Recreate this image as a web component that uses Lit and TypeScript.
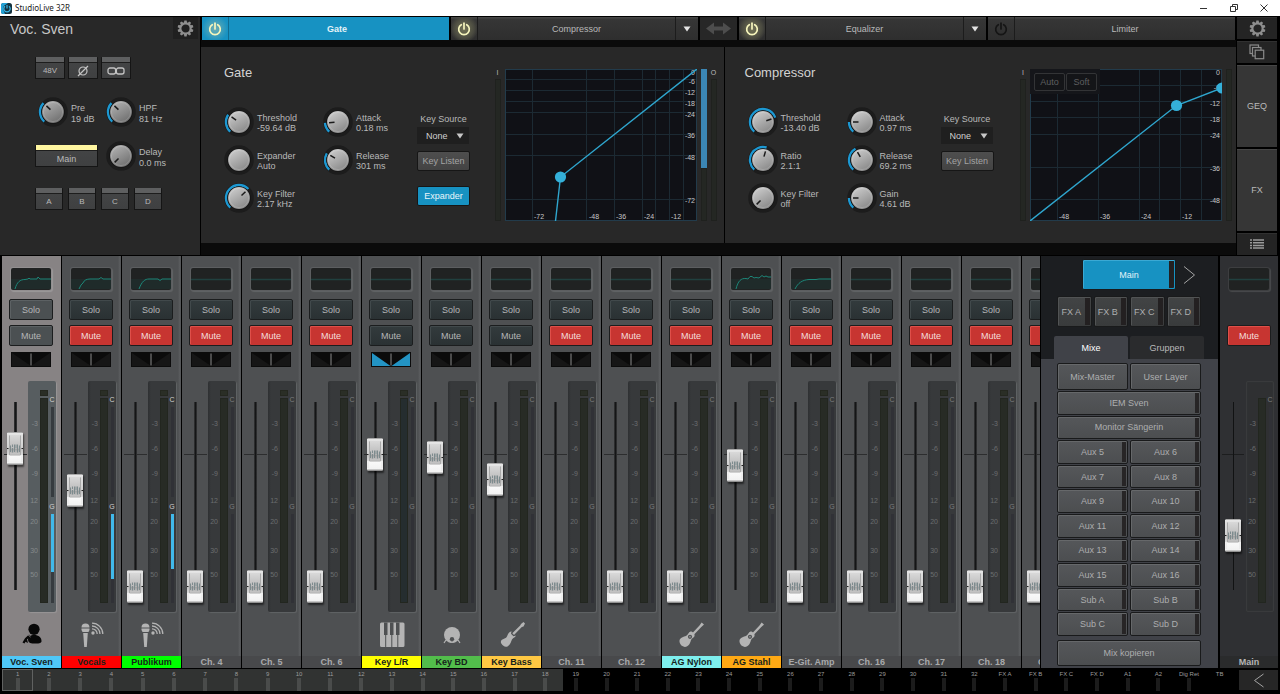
import { LitElement, html, svg, css, nothing, unsafeCSS } from "lit";
import { customElement, property } from "lit/decorators.js";
import { classMap } from "lit/directives/class-map.js";
import { styleMap } from "lit/directives/style-map.js";

const svgUrl = (markup: string) => unsafeCSS(`url("data:image/svg+xml,${encodeURIComponent(markup)}")`);

const faderCap = svgUrl(`<svg xmlns="http://www.w3.org/2000/svg" width="16" height="33" viewBox="0 0 16 33">
<defs><linearGradient id="b" x2="0" y2="1"><stop offset="0" stop-color="#8b8b8b"/><stop offset=".05" stop-color="#efefef"/><stop offset=".1" stop-color="#d8d8d8"/><stop offset=".48" stop-color="#bcbcbc"/><stop offset=".53" stop-color="#a2a2a2"/><stop offset=".68" stop-color="#c9c9c9"/><stop offset=".7" stop-color="#fafafa"/><stop offset=".93" stop-color="#f2f2f2"/><stop offset="1" stop-color="#777"/></linearGradient></defs>
<rect width="16" height="33" rx="1" fill="url(#b)"/>
<path d="M2.5 3.5V23H13.5V3.5" fill="none" stroke="#a9a9a9" stroke-width="1"/><path d="M1 3V30M15 3V30" stroke="#e6e6e6"/>
<path d="M0 16.500H1.500M14.500 16.500H16" stroke="#222"/>
<path d="M3.500 13.500V20M5.500 12.500V15M5.500 16V20.500M7.500 12.500V20M9 12.500V16M10.500 12.500V20.500M12.500 13.500V20" stroke="#7d8b8e" stroke-width="1"/></svg>`);

const downArrow = svgUrl(`<svg xmlns="http://www.w3.org/2000/svg" width="8" height="6"><path d="M0.500 0.500H7.500L4 5.500Z" fill="#c8c8c8"/></svg>`);

const base = css`
  * { box-sizing: border-box; }
  button, select, input {
    font: inherit;
    color: inherit;
    margin: 0;
    padding: 0;
    border: 0;
    border-radius: 0;
    background: none;
  }
  svg { display: block; flex: none; }
`;

const gearIcon = (size: number) => svg`
  <svg width=${size} height=${size} viewBox="0 0 18 18" aria-hidden="true">
    <g fill="#8e8e8e">
      ${Array.from({ length: 10 }, (_, i) => svg`<path d="M7.200 3.800L7.800 0.600H10.200L10.800 3.800Z" transform="rotate(${i * 36} 9 9)"></path>`)}
    </g>
    <circle cx="9" cy="9" r="5.400" fill="none" stroke="#8e8e8e" stroke-width="2.200"></circle>
  </svg>`;

const powerIcon = (color: string) => svg`
  <svg width="14" height="14" viewBox="0 0 14 14" aria-hidden="true">
    <path d="M4.300 2.700A5.300 5.300 0 1 0 9.700 2.700" fill="none" stroke=${color} stroke-width="1.700" stroke-linecap="round"></path>
    <path d="M7 1.200V7" stroke=${color} stroke-width="1.700" stroke-linecap="round"></path>
  </svg>`;

const triangle = svg`<svg width="8" height="6" viewBox="0 0 8 6" aria-hidden="true"><path d="M0.500 0.500H7.500L4 5.500Z" fill="#e4e4e4"></path></svg>`;

const acoustic = svg`
  <g transform="translate(1 1)">
    <path d="M23.600 0.600L26 2.600L23.300 5L15.600 13L14 11.500L21.500 3.500Z" fill="#b4b4b4"></path>
    <path d="M12.500 9.600C14.500 9.300 17.300 12.200 16.500 14.300C15.800 16 13.600 16.200 12.900 18.300C12.200 21.500 10.600 24.800 6.800 24.900C3.200 24.600 1.200 21.300 1.500 18.600C2 15.700 5.500 14.900 8.300 13.800C10.200 13 10.500 10.200 12.500 9.600Z" fill="#b4b4b4"></path>
    <circle cx="12" cy="14.800" r="2.100" fill="#4e5052"></circle><circle cx="12" cy="14.800" r="1" fill="#85878a"></circle>
  </g>`;

const mic = svg`
  <path d="M4.500 6.500A4 4 0 0 1 12.500 6.500Z M4.500 7.500H12.500V9L11.500 11H5.500L4.500 9Z M6.200 12H10.800L9.800 26H7.200Z" fill="#b4b4b4"></path>
  <circle cx="16" cy="12" r="1.700" fill="#b4b4b4"></circle>
  <path d="M15 7.800A5.200 5.200 0 0 1 20.200 13M15 5A8 8 0 0 1 23 13M15 2.200A10.800 10.800 0 0 1 25.800 13" fill="none" stroke="#b4b4b4" stroke-width="1.300"></path>`;

const stripIcons: Record<string, unknown> = {
  singer: svg`
    <circle cx="17" cy="8.300" r="5.600" fill="#080808"></circle>
    <path d="M11 18.500C11 15.500 13.500 14 17 14C21.700 14 24.700 16.500 24.500 20.500C24.300 22.300 21 22.600 17.500 22.600C14.500 22.600 11.200 22.300 11 18.500Z" fill="#080808"></path>
    <path d="M5.500 21.500L8 17.200L12 13.500L14 16L10 18.300L11 22L8.500 20.800L7.500 22.500Z" fill="#080808"></path>
    <path d="M10.800 13.500L13.500 16" stroke="#878384" stroke-width="1"></path>`,
  mic,
  piano: svg`
    <path d="M4.500 1.500H26A1.500 1.500 0 0 1 27.500 3V24.500A1.500 1.500 0 0 1 26 26H4.500A1.500 1.500 0 0 1 3 24.500V3A1.500 1.500 0 0 1 4.500 1.500Z" fill="#b4b4b4"></path>
    <path d="M7 1.500H10.500V14H7ZM13 1.500H16.500V14H13ZM19 1.500H22.500V14H19Z" fill="#4e5052"></path>
    <path d="M8.700 13V26M14.800 13V26M20.800 13V26" stroke="#4e5052" stroke-width="1"></path>`,
  kick: svg`
    <circle cx="15" cy="14" r="8" fill="#b4b4b4"></circle>
    <circle cx="15" cy="18.300" r="2.200" fill="#4e5052"></circle>
    <path d="M9 19L7 22M21 19L23 22M13.500 21.500V19.800M16.500 21.500V19.800" stroke="#b4b4b4" stroke-width="1.200"></path>`,
  bass: svg`
    <path d="M24 3L26.500 1L28 2.500L26.500 5.500L24.800 6L17 14L15.300 12.300L23.200 4.500Z" fill="#b4b4b4"></path>
    <path d="M14.500 10.200L14 12.800L16.500 15.200L18.800 14.500C18.500 16.500 16.300 16.400 15 18.500C14 20.200 13.800 23.500 10.500 25.500C7.800 26.600 6 24.800 4.500 22.800C3 20.500 4.300 18.700 6.500 18C9 17.200 9.500 16.500 10.500 14.300C11.300 12.300 12.500 10.600 14.500 10.200Z" fill="#b4b4b4"></path>`,
  acoustic,
};

@customElement("knob-control")
export class KnobControl extends LitElement {
  @property() label = "";
  @property() value = "";
  @property({ type: Number }) angle: number | null = null;
  @property({ type: Boolean }) dim = false;

  static styles = [base, css`
    :host { display: block; }
    .knob { display: flex; align-items: center; gap: 3px; height: 30px; line-height: 10px; white-space: nowrap; color: #b9b9b9; }
    .dial { display: grid; width: 30px; height: 30px; flex: none; }
    .dial > * { grid-area: 1 / 1; }
    .range { width: 30px; height: 30px; opacity: 0; cursor: pointer; }
    .text { display: grid; margin-top: 2px; }
    .dim .text { gap: 1px; }
  `];

  private arc(angle: number) {
    const point = (deg: number) => {
      const rad = (deg * Math.PI) / 180;
      return `${15 + 13 * Math.sin(rad)} ${15 - 13 * Math.cos(rad)}`;
    };
    return `M${point(-138)}A13 13 0 ${angle + 138 > 180 ? 1 : 0} 1 ${point(angle)}`;
  }

  render() {
    const a = this.angle;
    const light = this.dim ? "#b2b2b2" : "#cdcdcd";
    const dark = this.dim ? "#6c6c6c" : "#858585";
    return html`
      <label class=${classMap({ knob: true, dim: this.dim })}>
        <span class="dial">
          <svg width="30" height="30" viewBox="0 0 30 30" aria-hidden="true">
            <defs>
              <linearGradient id="g" x1="0.200" y1="0" x2="0.800" y2="1">
                <stop offset="0" stop-color=${light}></stop><stop offset="1" stop-color=${dark}></stop>
              </linearGradient>
            </defs>
            <circle cx="15" cy="15" r="14.800" fill="#1c1c1c"></circle>
            ${a !== null && a > -130 ? svg`<path d=${this.arc(a)} fill="none" stroke="#1c98d2" stroke-width="2.400"></path>` : nothing}
            <circle cx="15" cy="15" r="11.600" fill="#101010"></circle>
            <circle cx="15" cy="15" r="10.900" fill="url(#g)"></circle>
            <circle cx="15" cy="15" r="9.600" fill="none" stroke="#ffffff" stroke-opacity="0.150" stroke-width="1"></circle>
            ${a !== null ? svg`<path d="M15 6V11.500" stroke="#1a1a1a" stroke-width="1.500" transform="rotate(${a} 15 15)"></path>` : nothing}
          </svg>
          <input class="range" type="range" min="-135" max="135" .value=${String(a ?? 0)} />
        </span>
        <span class="text"><span>${this.label}</span><span>${this.value}</span></span>
      </label>`;
  }
}

interface Channel {
  name: string;
  color?: string;
  icon?: string;
  muted?: boolean;
  selected?: boolean;
  level: number;
  gain?: number;
  eq?: string;
  wide?: boolean;
}

const quiet = 0;
const channels: Channel[] = [
  { name: "Voc. Sven", color: "#4fc8f8", icon: "singer", selected: true, level: 138, gain: 58, eq: "M4 21C6 14 9 11.500 14 11.500L17 11L18 10L19 11H26L27 9L29 11H40" },
  { name: "Vocals", color: "#ff0000", icon: "mic", muted: true, level: 96, gain: 65, eq: "M8 21L10 17L12 15C13 12 16 11 19 11H28L30 9.500L32 11H40" },
  { name: "Publikum", color: "#00ff00", icon: "mic", muted: true, level: quiet, gain: 55, eq: "M8 21C11 13 14 11 18 11H27L29 12.500L31 11H40" },
  { name: "Ch. 4", muted: true, level: quiet },
  { name: "Ch. 5", muted: true, level: quiet },
  { name: "Ch. 6", muted: true, level: quiet },
  { name: "Key L/R", color: "#ffff00", icon: "piano", level: 132, wide: true },
  { name: "Key BD", color: "#52bd4b", icon: "kick", level: 129 },
  { name: "Key Bass", color: "#ffc843", icon: "bass", level: 107 },
  { name: "Ch. 11", muted: true, level: quiet },
  { name: "Ch. 12", muted: true, level: quiet },
  { name: "AG Nylon", color: "#7eefee", icon: "acoustic", muted: true, level: quiet },
  { name: "AG Stahl", color: "#ffa914", icon: "acoustic", muted: true, level: 121, eq: "M5 21C7 13 10 10 15 10.500L17 11L19 8.500L21 8.500L23 10L25 9.500L28 10L31 7.500L33 9L35 8L37 9H40" },
  { name: "E-Git. Amp", muted: true, level: quiet, eq: "M4 21C7 15 11 12 18 11.500H25L28 11H40" },
  { name: "Ch. 16", muted: true, level: quiet },
  { name: "Ch. 17", muted: true, level: quiet },
  { name: "Ch. 18", muted: true, level: quiet },
  { name: "Ch. 19", muted: true, level: quiet },
];
const mainChannel: Channel = { name: "Main", muted: true, level: 51 };

@customElement("channel-strip")
export class ChannelStrip extends LitElement {
  @property({ attribute: false }) channel!: Channel;
  @property({ type: Boolean }) master = false;

  static styles = [base, css`
    :host { display: block; flex: none; width: 60px; }
    .strip {
      display: flex; flex-direction: column; height: 100%;
      background: linear-gradient(to right, #4e5052 56px, #5c5e60 58px, #4e5052 59px);
      border-right: 1px solid #000;
      color: #b5b6b7;
    }
    .selected { background: #878384; }
    .master { background: #2f3033; border-right: 0; width: 58px; }
    .controls { display: flex; flex-direction: column; padding: 12px 7px 14px; }
    .eq { width: 40px; height: 22px; margin: 0 2px 9px; border-radius: 2px; background: #202222; box-shadow: 0 0 0 1px #5c5e60, 1px 1px 1px 1px #626466; }
    .selected .eq { box-shadow: 0 0 0 1px #928f90, 1px 1px 1px 1px #9c999a; }
    .master .eq { box-shadow: 0 0 0 1px #3d3e40, 1px 1px 1px 1px #4a4b4d; }
    .btn {
      height: 21px; width: 44px; border: 1px solid #1b1d1e; border-radius: 2px; margin-bottom: 5px;
      background: linear-gradient(#333b3d, #2a3133); box-shadow: inset 1px 1px 0 #41494b; text-align: center;
    }
    .selected .btn { background: #4b5052; box-shadow: inset 1px 1px 0 #5c6163; }
    .btn.muted { background: #c73531; box-shadow: inset 1px 1px 0 #df4f49; color: #f4dddc; }
    .gap { height: 21px; margin-bottom: 5px; }
    .pan { width: 40px; height: 15px; margin: 1px 2px 0; background: #0e0e0e; }
    .blank { visibility: hidden; }
    .area { display: grid; grid-template-columns: 26px 28px; height: 231px; }
    .fader {
      appearance: none; -webkit-appearance: none; writing-mode: vertical-lr; direction: rtl;
      width: 26px; height: 217px; margin-top: 5px;
      background:
        linear-gradient(to right, #3c3d3e, #141516 40%, #141516 60%, #3c3d3e) 12px 16px / 3px 188px no-repeat,
        linear-gradient(#2c2d2e, #2c2d2e) 2px 68px / 23px 1px no-repeat;
    }
    .master .fader {
      background:
        linear-gradient(#111213, #111213) 13px 16px / 1px 188px no-repeat,
        linear-gradient(#1c1d1e, #1c1d1e) 2px 68px / 22px 1px no-repeat;
    }
    .fader::-webkit-slider-runnable-track { width: 26px; height: 217px; background: none; }
    .fader::-webkit-slider-thumb {
      -webkit-appearance: none; width: 16px; height: 33px; margin: 0 5px;
      background: ${faderCap}; border: 0; border-radius: 1px; box-shadow: 1px 2px 2px rgba(0, 0, 0, 0.55);
    }
    .meter {
      display: grid; grid-template-columns: 12px 8px 8px; height: 231px; border-radius: 2px;
      background: linear-gradient(to right, #2e3032, #37393b 3px, #37393b); box-shadow: 1px 1px 1px #616365;
    }
    .selected .meter { background: #575d60; box-shadow: 1px 1px 1px #989596; }
    .master .meter { background: #2f3032; box-shadow: inset 0 0 1px 1px #3b3c3e; }
    .scale {
      display: grid; grid-template-rows: 25px 25px 27px 21px 29px 24px 10px; padding: 38px 2px 0 0;
      font-size: 7px; line-height: 10px; color: #6b6d6f; text-align: right;
    }
    .selected .scale { color: #868a8c; }
    .bar { display: flex; flex-direction: column; gap: 2px; padding: 9px 0; }
    .clip { height: 6px; background: #2a2e26; border: 1px solid #24271f; }
    .level { flex: 1; background: #272b25; border: 1px solid #22261f; }
    .wide .level { background: #252d2f; }
    .master .clip { visibility: hidden; }
    .dyn { display: flex; flex-direction: column; align-items: center; font-size: 7px; line-height: 8px; padding-top: 15px; gap: 3px; color: #7b7d7f; }
    .active .dyn { color: #d2d2d2; }
    .slot { width: 3px; height: 90px; background: #303136; }
    .slot.second { height: 89px; }
    .slot.long { height: 189px; }
    .selected .slot { background: #363b3f; }
    .g { margin-top: 3px; }
    .fill { width: 3px; background: #41b9ea; }
    .icon { flex: 1; display: grid; place-items: center; min-height: 44px; padding-top: 2px; }
    .name { height: 12px; line-height: 12px; font-weight: bold; text-align: center; white-space: nowrap; background: #48494b; color: #a9aaab; }
    .named { color: #16221c; }
    .master .name { background: #2a2b2c; color: #b5b5b5; }
  `];

  render() {
    const c = this.channel;
    const eqPath = c.eq;
    return html`
      <section class=${classMap({ strip: true, selected: !!c.selected, master: this.master, active: !!c.gain, wide: !!c.wide })} aria-label=${c.name}>
        <div class="controls">
          <svg class="eq" viewBox="0 0 40 22" aria-hidden="true">
            ${eqPath
              ? svg`<path d="M0 11H40V21H0Z" fill="#1e3836" opacity="0.450"></path><path d=${eqPath} fill="none" stroke="#1d8678" stroke-width="1"></path>`
              : svg`<path d="M0 11.500H40" stroke="#20403f" stroke-width="1.500"></path>`}
          </svg>
          ${this.master ? html`<div class="gap"></div>` : html`<button class="btn">Solo</button>`}
          <button class=${classMap({ btn: true, muted: !!c.muted })}>Mute</button>
          <svg class=${classMap({ pan: true, blank: this.master })} viewBox="0 0 40 15" aria-hidden="true">
            <rect width="40" height="15" fill="#0b0b0b"></rect>
            <path d=${c.wide ? "M1 1V14H19.500ZM39 1V14H20.500Z" : "M1 1L20 14H1ZM39 1L20 14H39Z"} fill=${c.wide ? "#2394c4" : "#161616"}></path>
            <path d="M20 1.500V13.500" stroke="#8b8b8b" stroke-width="1"></path>
          </svg>
        </div>
        <div class="area">
          <input class="fader" type="range" min="0" max="184" .value=${String(c.level)} aria-label="${c.name} level" />
          <div class="meter">
            <div class="scale">${["-3", "-6", "-9", "12", "20", "30", "50"].map((t) => html`<span>${t}</span>`)}</div>
            <div class="bar"><div class="clip"></div><div class="level"></div></div>
            <div class="dyn">
              <span>C</span>
              ${this.master
                ? html`<div class="slot long"></div>`
                : html`<div class="slot"></div><span class="g">G</span>
                    <div class="slot second"><div class="fill" style=${styleMap({ height: `${c.gain ?? 0}px` })}></div></div>`}
            </div>
          </div>
        </div>
        <div class="icon">
          ${c.icon ? html`<svg width="30" height="28" viewBox="0 0 30 28" aria-hidden="true">${stripIcons[c.icon]}</svg>` : nothing}
        </div>
        <div class=${classMap({ name: true, named: !!c.color })} style=${styleMap(c.color ? { background: c.color } : {})}>${c.name}</div>
      </section>`;
  }
}

interface Plot {
  x: number[];
  y: number[];
  right: [string, number][];
  bottom: [string, number][];
  curve: string;
  dots: [number, number][];
}

const gatePlot: Plot = {
  x: [27, 81, 109, 137, 150, 164, 178],
  y: [10, 21, 32, 43, 65, 86, 130],
  right: [["0", 3], ["-6", 12], ["-12", 23], ["-18", 34], ["-24", 45], ["-36", 66], ["-48", 88], ["-72", 131]],
  bottom: [["-72", 29], ["-48", 84], ["-36", 111], ["-24", 139], ["-12", 166]],
  curve: "M50.500 152L55.500 108L192 0",
  dots: [[55.5, 108]],
};
const compPlot: Plot = {
  x: [27, 68, 109, 129, 150, 171],
  y: [16, 32, 48, 65, 98, 130],
  right: [["0", 3], ["-6", 18], ["-12", 34], ["-18", 50], ["-24", 66], ["-36", 99], ["-48", 131]],
  bottom: [["-48", 29], ["-36", 70], ["-24", 111], ["-12", 152]],
  curve: "M0 152L146.500 36.500L192 19",
  dots: [[146.5, 36.5], [192, 19]],
};

@customElement("app-root")
export class AppRoot extends LitElement {
  static styles = [base, css`
    :host {
      display: flex; flex-direction: column; min-height: 100vh; background: #000; color: #b9b9b9;
      font-family: "Liberation Sans", Arial, sans-serif; font-size: 9px; line-height: 12px;
    }
    .titlebar { display: flex; align-items: center; height: 16px; background: #fff; color: #222; font-family: "Noto Sans", sans-serif; font-size: 8px; padding: 0 9px 0 1px; gap: 3px; }
    .titlebar .grow { flex: 1; }
    .wins { display: flex; gap: 15px; }
    .wins button { width: 15px; height: 14px; display: grid; place-items: center; }

    .top { display: flex; gap: 1px; height: 240px; padding: 1px 3px 1px 0; }
    .input { width: 200px; flex: none; background: #282828; }
    .head { display: flex; justify-content: space-between; height: 40px; padding: 0 2px 0 10px; }
    .head h1 { margin: 0; font-size: 14px; font-weight: normal; line-height: 24px; color: #c8c8c8; }
    .head .cog { width: 25px; height: 22px; background: #202020; display: grid; place-items: center; }
    .rows { padding-left: 35px; }
    .row { display: flex; gap: 3px; }
    .quad { gap: 5px; margin-top: 17px; }
    .pair { display: grid; grid-template-columns: 71px 1fr; align-items: center; margin-top: 14px; }
    .pair.first { margin-top: 18px; }
    .pair .in { margin-left: 3px; }
    .lit {
      width: 30px; height: 22px; border: 1px solid #151515; border-top: 0; padding-top: 6px; display: grid; place-items: center;
      background: linear-gradient(#5e5f60 5px, #1d1d1d 5px, #1d1d1d 6px, #434445 6px, #3f4041);
      font-size: 8px; line-height: 12px; border-radius: 1px;
    }
    .quad .lit { width: 28px; }
    .lit.on { width: 63px; font-size: 9px; background: linear-gradient(#fff6a0 5px, #1d1d1d 5px, #1d1d1d 6px, #434445 6px, #3f4041); }

    .center { flex: 1; min-width: 0; display: flex; flex-direction: column; background: #0b0b0b; }
    .tabs { display: flex; gap: 2px; height: 23px; padding: 0 1px; background: #000; }
    .tab { flex: 1; display: flex; background: linear-gradient(#454645 1px, #363636 2px, #2e2e2e); }
    .tab .power { width: 27px; display: grid; place-items: center; border-right: 1px solid #1c1c1c; }
    .tab .power.lit-on { background: radial-gradient(circle, #6d6d52 2px, #4a4a40 10px, transparent 14px); }
    .tab .label { flex: 1; text-align: center; }
    .tab .drop { width: 23px; display: grid; place-items: center; border-left: 1px solid #1c1c1c; }
    .tab.active { background: #1792c2; color: #e4f2f8; font-weight: bold; }
    .tab.active .label { padding-right: 4px; }
    .tab.active .power { border-color: #106c90; }
    .tab.active .power.lit-on { background: radial-gradient(circle, #63aab4 2px, #1792c2 13px); }
    .swap { width: 37px; background: #272727; display: grid; place-items: center; }
    .panels { display: flex; gap: 1px; margin-top: 7px; background: #000; }
    .panel { display: flex; justify-content: space-between; height: 196px; background: #282828; padding: 0 7px 0 23px; }
    .gate { flex: 493 1 0; }
    .comp { flex: 488 1 0; padding-left: 20px; padding-right: 4px; }
    .comp .params { padding-left: 3px; }
    .panel h2 { margin: 17px 0 27px; font-size: 13px; font-weight: normal; line-height: 17px; height: 16px; color: #d3d3d3; }
    .params { display: grid; grid-template-columns: 99px 94px 53px; }
    .knobs { display: flex; flex-direction: column; gap: 8px; }
    .key { display: flex; flex-direction: column; padding-top: 6px; }
    .key label { display: grid; gap: 2px; text-align: center; white-space: nowrap; }
    .key select { appearance: none; width: 52px; height: 17px; padding-left: 9px; color: #d0d0d0; background: ${downArrow} 39px 6px no-repeat #1f1f1f; }
    .push { height: 20px; border: 1px solid #161616; border-radius: 2px; background: linear-gradient(#4e4e4e, #434343); color: #a3a3a3; margin-top: 7px; white-space: nowrap; }
    .push.on { background: #1792c2; color: #eaf6fb; margin-top: 15px; }
    .scope { display: flex; gap: 4px; margin-top: 22px; height: 152px; }
    .vu { display: flex; flex-direction: column; width: 6px; font-size: 7px; line-height: 7px; gap: 3px; align-items: center; }
    .vu i { flex: 1; width: 6px; background: #242723; border: 1px solid #1f211e; }
    .vu .reduction { flex: none; height: 99px; background: #3b86b4; border: 0; }
    .vu.solid { gap: 0; }
    .plot { display: grid; width: 192px; background: #101116; }
    .plot > * { grid-area: 1 / 1; }
    .plot text { font-size: 7px; fill: #c6c6c6; }
    .modes { display: flex; gap: 1px; align-self: start; justify-self: start; background: #15161a; padding: 4px 3px 3px 4px; z-index: 1; }
    .modes button { width: 31px; height: 18px; border: 1px solid #333436; border-radius: 2px; color: #5e5f60; background: #141518; }

    .side { width: 40px; display: flex; flex-direction: column; gap: 2px; }
    .side button { display: grid; place-items: center; height: 22px; background: #242424; box-shadow: inset 0 1px 0 #303030; }
    .side .big { flex: 1; background: #363636; box-shadow: inset 0 1px 0 #474747; }

    .mixer { flex: 1; display: flex; min-height: 412px; padding-left: 2px; }
    .channels { flex: 1; min-width: 0; display: flex; overflow: hidden; }
    .mixes { width: 180px; flex: none; display: flex; flex-direction: column; background: #1c1e21; border: solid #000; border-width: 0 2px 0 1px; }
    .mainrow { display: flex; gap: 7px; align-items: center; padding: 3px 0 0 41px; }
    .key-btn {
      height: 100%; border: 1px solid #191a1b; border-radius: 2px; white-space: nowrap; color: #adaeaf;
      box-shadow: inset 1px 1px 0 #66686a; background: linear-gradient(#55575a, #4c4e50);
    }
    .slotted {
      background: linear-gradient(#272526, #272526) right 1px center / 4px calc(100% - 2px) no-repeat, linear-gradient(#55575a, #4c4e50);
    }
    .key-btn.main { width: 94px; height: 31px; color: #e3f2f8; background: linear-gradient(#232021, #232021) right 1px center / 5px calc(100% - 2px) no-repeat, #1792c2; box-shadow: inset 1px 1px 0 #3aa9d4, inset -1px -1px 0 #1792c2; }
    .chev { width: 13px; height: 20px; }
    .fx { display: grid; grid-template-columns: repeat(4, 1fr); gap: 2px; padding: 6px 17px 0 16px; height: 37px; }
    .fx .key-btn { padding-right: 6px; background: linear-gradient(#232021, #232021) right 1px center / 5px calc(100% - 2px) no-repeat, linear-gradient(#424445, #393b3c); box-shadow: inset 1px 1px 0 #515354; }
    .mixtabs { display: flex; gap: 2px; padding: 9px 14px 0 13px; }
    .mixtabs button { flex: 1; height: 23px; background: #2a2b2d; border-radius: 2px 2px 0 0; }
    .mixtabs .sel { background: #404248; color: #fff; }
    .mixbody { flex: 1; display: flex; flex-direction: column; background: #404248; padding: 4px 17px 2px 16px; }
    .grid { display: grid; grid-template-columns: 1fr 1fr; gap: 1px 2px; }
    .grid.heads { height: 27px; margin-bottom: 1px; }
    .grid.auxes { flex: 1; grid-auto-rows: 1fr; margin-bottom: 4px; }
    .span { grid-column: 1 / -1; }
    .key-btn.copy { height: 26px; flex: none; }

    .nav { display: flex; gap: 4px; height: 26px; padding: 1px 2px 4px; font-size: 6px; line-height: 8px; color: #9c9c9c; }
    .map { flex: 1; display: flex; height: 22px; background: linear-gradient(to right, #313332 45.5%, #000 45.5%); }
    .spot { flex: 50 1 0; min-width: 0; display: flex; flex-direction: column; align-items: center; white-space: nowrap; padding-top: 1px; color: inherit; }
    .spot.broad { flex-grow: 51; }
    .spot i { width: 4px; height: 13px; background: #4a4c4b; }
    .spot.off i { background: #1c1c1c; }
    .spot.current { outline: 1px solid #606261; outline-offset: -1px; }
    .back { width: 39px; height: 20px; margin-top: 1px; background: #262626; display: grid; place-items: center; }
  `];

  private tab(name: string, o: { on?: boolean; active?: boolean; menu?: boolean }) {
    return html`
      <div class=${classMap({ tab: true, active: !!o.active })}>
        <button class=${classMap({ power: true, "lit-on": !!o.on })} aria-label="${name} on/off">${powerIcon(o.on ? "#f6f5bc" : "#151515")}</button>
        <button class="label">${name}</button>
        ${o.menu ? html`<button class="drop" aria-label="${name} models">${triangle}</button>` : nothing}
      </div>`;
  }

  private knob(label: string, value: string, angle: number | null, dim = false) {
    return html`<knob-control .label=${label} .value=${value} .angle=${angle} .dim=${dim}></knob-control>`;
  }

  private keySource(on?: string) {
    return html`
      <div class="key">
        <label>Key Source<select><option>None</option></select></label>
        <button class="push">Key Listen</button>
        ${on ? html`<button class="push on">${on}</button>` : nothing}
      </div>`;
  }

  private plot(p: Plot) {
    return html`
      <svg width="192" height="152" viewBox="0 0 192 152" role="img" aria-label="Transfer curve">
        <g stroke="#1c2a33" stroke-width="1">
          ${p.x.map((x) => svg`<path d="M${x + 0.5} 0V152"></path>`)}
          ${p.y.map((y) => svg`<path d="M0 ${y + 0.5}H192"></path>`)}
        </g>
        <rect x="0.500" y="0.500" width="191" height="151" fill="none" stroke="#223b4b"></rect>
        ${p.right.map(([t, y]) => svg`<text x="190" y=${y + 3} text-anchor="end">${t}</text>`)}
        ${p.bottom.map(([t, x]) => svg`<text x=${x} y="150">${t}</text>`)}
        <path d=${p.curve} fill="none" stroke="#2fa6ce" stroke-width="1.400"></path>
        ${p.dots.map(([x, y]) => svg`<circle cx=${x} cy=${y} r="5.600" fill="#34b0d9"></circle>`)}
      </svg>`;
  }

  render() {
    const spots = [...Array.from({ length: 32 }, (_, i) => String(i + 1)), "FX A", "FX B", "FX C", "FX D", "A1", "A2", "Dig Ret", "TB"];
    const auxes = [...Array.from({ length: 12 }, (_, i) => `Aux ${i + 5}`), "Sub A", "Sub B", "Sub C", "Sub D"];
    return html`
      <header class="titlebar">
        <svg width="11" height="11" viewBox="0 0 11 11" aria-hidden="true">
          <rect width="11" height="11" rx="2.500" fill="#16323f"></rect>
          <path d="M0 2.500A2.500 2.500 0 0 1 2.500 0H7L5 1.500C2 2.500 1.500 6 3 8.500L4 11H2.500A2.500 2.500 0 0 1 0 8.500Z" fill="#23a3d8"></path>
          <path d="M4 3.200A3.200 3.200 0 1 0 8 3.200M6 2V5.500" fill="none" stroke="#38b8ea" stroke-width="1.200"></path>
        </svg>
        <span>StudioLive 32R</span>
        <span class="grow"></span>
        <div class="wins">
          <button aria-label="Minimize"><svg width="7" height="7"><path d="M0 3.500H7" stroke="#333"></path></svg></button>
          <button aria-label="Restore"><svg width="8" height="8"><path d="M0.500 2.500H5.500V7.500H0.500ZM2.500 2V0.500H7.500V5.500H6" fill="none" stroke="#333"></path></svg></button>
          <button aria-label="Close"><svg width="8" height="8"><path d="M0.500 0.500L7.500 7.500M7.500 0.500L0.500 7.500" stroke="#333"></path></svg></button>
        </div>
      </header>

      <div class="top">
        <section class="input" aria-label="Input">
          <div class="head"><h1>Voc. Sven</h1><button class="cog" aria-label="Channel settings">${gearIcon(17)}</button></div>
          <div class="rows">
            <div class="row">
              <button class="lit">48V</button>
              <button class="lit" aria-label="Polarity"><svg width="12" height="12" viewBox="0 0 12 12"><circle cx="6" cy="6" r="4" fill="none" stroke="#c4c4c4" stroke-width="1.200"></circle><path d="M1 11L11 1" stroke="#c4c4c4" stroke-width="1.200"></path></svg></button>
              <button class="lit" aria-label="Stereo link"><svg width="18" height="8" viewBox="0 0 18 8"><rect x="1" y="1" width="7.600" height="6" rx="2" fill="none" stroke="#c4c4c4" stroke-width="1.300"></rect><rect x="9.400" y="1" width="7.600" height="6" rx="2" fill="none" stroke="#c4c4c4" stroke-width="1.300"></rect></svg></button>
            </div>
            <div class="pair first"><div class="in">${this.knob("Pre", "19 dB", -47, true)}</div>${this.knob("HPF", "81 Hz", -47, true)}</div>
            <div class="pair"><button class="lit on">Main</button>${this.knob("Delay", "0.0 ms", -135, true)}</div>
            <div class="row quad">${["A", "B", "C", "D"].map((t) => html`<button class="lit">${t}</button>`)}</div>
          </div>
        </section>

        <div class="center">
          <nav class="tabs">
            ${this.tab("Gate", { on: true, active: true })}
            ${this.tab("Compressor", { on: true, menu: true })}
            <button class="swap" aria-label="Swap order"><svg width="25" height="13" viewBox="0 0 25 13"><path d="M0 6.500L8 0.500V4.500H17V0.500L25 6.500L17 12.500V8.500H8V12.500Z" fill="#4d4d4d"></path></svg></button>
            ${this.tab("Equalizer", { on: true, menu: true })}
            ${this.tab("Limiter", {})}
          </nav>
          <div class="panels">
            <section class="panel gate">
              <div>
                <h2>Gate</h2>
                <div class="params">
                  <div class="knobs">${this.knob("Threshold", "-59.64 dB", -56)}${this.knob("Expander", "Auto", null)}${this.knob("Key Filter", "2.17 kHz", 46)}</div>
                  <div class="knobs">${this.knob("Attack", "0.18 ms", -94)}${this.knob("Release", "301 ms", -59)}</div>
                  ${this.keySource("Expander")}
                </div>
              </div>
              <div class="scope">
                <div class="vu"><span>I</span><i></i></div>
                <div class="plot">${this.plot(gatePlot)}</div>
                <div class="vu solid"><i class="reduction"></i><i></i></div>
                <div class="vu"><span>O</span><i></i></div>
              </div>
            </section>
            <section class="panel comp">
              <div>
                <h2>Compressor</h2>
                <div class="params">
                  <div class="knobs">${this.knob("Threshold", "-13.40 dB", 70)}${this.knob("Ratio", "2.1:1", 16)}${this.knob("Key Filter", "off", -135)}</div>
                  <div class="knobs">${this.knob("Attack", "0.97 ms", -90)}${this.knob("Release", "69.2 ms", -30)}${this.knob("Gain", "4.61 dB", -90)}</div>
                  ${this.keySource()}
                </div>
              </div>
              <div class="scope">
                <div class="vu"><span>I</span><i></i></div>
                <div class="plot">${this.plot(compPlot)}<div class="modes"><button>Auto</button><button>Soft</button></div></div>
                <div class="vu solid"><i></i></div>
              </div>
            </section>
          </div>
        </div>

        <nav class="side">
          <button aria-label="Settings">${gearIcon(17)}</button>
          <button aria-label="Scenes"><svg width="16" height="16" viewBox="0 0 16 16"><g fill="#242424" stroke="#8a8a8a" stroke-width="1.200"><rect x="1" y="1" width="8.500" height="8.500"></rect><rect x="3.500" y="3.500" width="8.500" height="8.500"></rect><rect x="6.200" y="6.200" width="8.500" height="8.500"></rect></g></svg></button>
          <button class="big">GEQ</button>
          <button class="big">FX</button>
          <button aria-label="List"><svg width="14" height="10" viewBox="0 0 14 10"><path d="M0 1H2M0 3.700H2M0 6.400H2M0 9.100H2M3 1H14M3 3.700H14M3 6.400H14M3 9.100H14" stroke="#9a9a9a" stroke-width="1.500"></path></svg></button>
        </nav>
      </div>

      <main class="mixer">
        <div class="channels">${channels.map((c) => html`<channel-strip .channel=${c}></channel-strip>`)}</div>
        <aside class="mixes">
          <div class="mainrow">
            <button class="key-btn main">Main</button>
            <button class="chev" aria-label="Next mix"><svg width="13" height="20" viewBox="0 0 13 20"><path d="M1 1.500L11.500 10L1 18.500" fill="none" stroke="#a4a4a4" stroke-width="1"></path></svg></button>
          </div>
          <div class="fx">${["A", "B", "C", "D"].map((t) => html`<button class="key-btn">FX ${t}</button>`)}</div>
          <div class="mixtabs"><button class="sel">Mixe</button><button>Gruppen</button></div>
          <div class="mixbody">
            <div class="grid heads"><button class="key-btn">Mix-Master</button><button class="key-btn">User Layer</button></div>
            <div class="grid auxes">
              <button class="key-btn slotted span">IEM Sven</button>
              <button class="key-btn slotted span">Monitor Sängerin</button>
              ${auxes.map((t) => html`<button class="key-btn slotted">${t}</button>`)}
            </div>
            <button class="key-btn copy">Mix kopieren</button>
          </div>
        </aside>
        <channel-strip .channel=${mainChannel} .master=${true}></channel-strip>
      </main>

      <footer class="nav">
        <div class="map">
          ${spots.map((t, i) => html`<button class=${classMap({ spot: true, broad: i < 11, off: i > 17, current: i === 0 })}>${t}${t === "TB" ? nothing : html`<i></i>`}</button>`)}
        </div>
        <button class="back" aria-label="Back"><svg width="12" height="15" viewBox="0 0 12 15"><path d="M10.500 1L1.500 7.500L10.500 14" fill="none" stroke="#a4a4a4" stroke-width="1"></path></svg></button>
      </footer>`;
  }
}
